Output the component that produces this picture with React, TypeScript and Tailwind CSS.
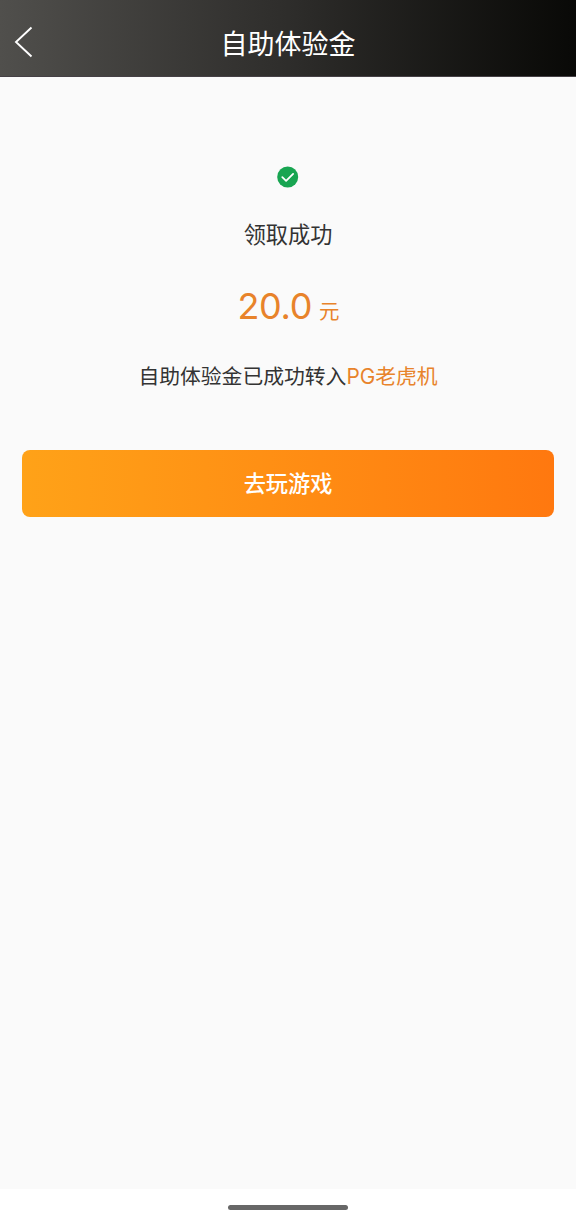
import React from "react";

const Header = () => {
  return (
    <header className="relative flex h-[77px] shrink-0 items-center justify-center bg-linear-to-r from-[#504f4c] via-[#2e2d2b] to-[#090907] pt-[13px] border-b border-[#454045]">
      <button type="button" aria-label="返回" className="absolute left-[14px] top-[26px]">
        <svg width="20" height="32" viewBox="0 0 20 32" fill="none">
          <path d="M17.5 1.5 L2 16 L17.5 30.5" stroke="#fff" strokeWidth="1.9" />
        </svg>
      </button>
      <h1 className="text-[27px] leading-[40px] text-white">自助体验金</h1>
    </header>
  );
};

const Result = () => {
  return (
    <section className="flex flex-col items-center pt-[89px] text-[#333333]">
      <svg width="22" height="22" viewBox="0 0 22 22" fill="none">
        <circle cx="10.7" cy="11" r="10.5" fill="#18a551" />
        <path
          d="M5.3 11.2 L9.1 14.8 L16.1 7.9"
          stroke="#fff"
          strokeWidth="1.8"
          strokeLinecap="round"
          strokeLinejoin="round"
        />
      </svg>

      <p className="mt-[31px] text-[22.2px] leading-[32px]">领取成功</p>

      <p className="mt-[31px] flex items-baseline gap-[7px] pl-px leading-[48px] text-[#e8832a]">
        <span className="font-['Inter'] text-[36px] tracking-[-0.3px]">20.0</span>
        <span className="text-[20.5px]">元</span>
      </p>

      <p className="mt-[25px] text-[20.8px] leading-[32px]">
        自助体验金已成功转入
        <span className="text-[#e8832a]">PG老虎机</span>
      </p>
    </section>
  );
};

const App = () => {
  return (
    <div className="flex h-[1226px] w-[576px] flex-col bg-[#fafafa] font-['Inter','Noto_Sans_CJK_SC',sans-serif]">
      <Header />

      <main className="flex-1">
        <Result />
        <div className="mt-[57px] px-[22px]">
          <button
            type="button"
            className="h-[67px] w-full rounded-lg bg-linear-to-r from-[#ffa218] to-[#ff780f] text-[22.2px] font-medium text-white"
          >
            去玩游戏
          </button>
        </div>
      </main>

      <footer className="flex h-[37px] shrink-0 justify-center bg-white pt-4">
        <div className="h-[5px] w-[120px] rounded-full bg-[#676767]" />
      </footer>
    </div>
  );
};

export default App;
